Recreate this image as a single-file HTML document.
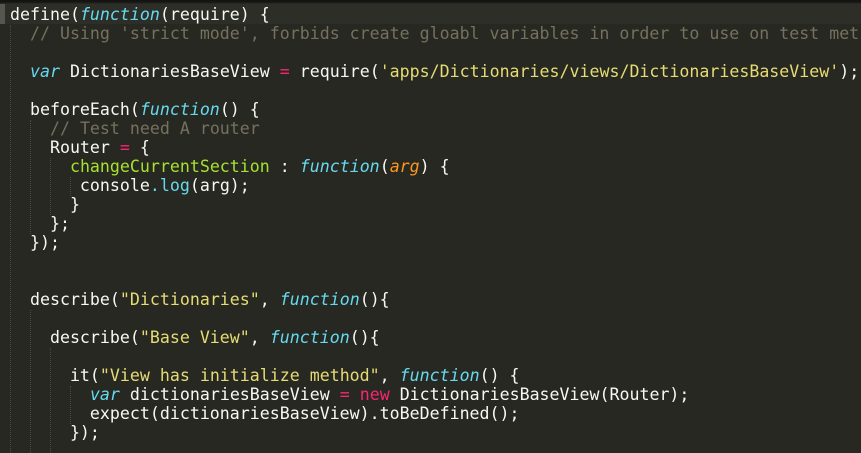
<!DOCTYPE html>
<html><head><meta charset="utf-8"><style>
html,body{margin:0;padding:0;background:#272822;width:861px;height:453px;overflow:hidden}
#top{position:absolute;left:0;top:0;width:861px;height:3px;background:linear-gradient(#111,#1c1d19)}
#cur{position:absolute;left:0;top:4px;width:5px;height:20px;background:#555650}
#hl{position:absolute;left:5px;top:4px;width:856px;height:20px;background:#2d2e28}
pre{position:absolute;left:10px;top:5px;margin:0;font-family:"DejaVu Sans Mono","Liberation Mono",monospace;font-size:16.6px;line-height:19px;color:#f8f8f2;white-space:pre}
.k{color:#66d9ef;font-style:italic}.s{color:#e6db74}.c{color:#75715e}.o{color:#f92672}.g{color:#a6e22e}.a{color:#fd971f;font-style:italic}.f{color:#66d9ef}
.gd{position:absolute;width:0;border-left:1px dotted #4a4b44}
</style></head><body>
<div id="top"></div><div id="hl"></div><div id="cur"></div>
<div class="gd" style="left:10px;top:25px;height:428px"></div>
<div class="gd" style="left:30px;top:120px;height:114px"></div>
<div class="gd" style="left:50px;top:158px;height:57px"></div>
<div class="gd" style="left:70px;top:177px;height:19px"></div>
<div class="gd" style="left:30px;top:310px;height:143px"></div>
<div class="gd" style="left:50px;top:348px;height:105px"></div>
<div class="gd" style="left:70px;top:386px;height:38px"></div>
<pre>define(<span class="k">function</span>(require) {
  <span class="c">// Using 'strict mode', forbids create gloabl variables in order to use on test met</span>

  <span class="k">var</span> DictionariesBaseView <span class="o">=</span> require(<span class="s">'apps/Dictionaries/views/DictionariesBaseView'</span>);

  beforeEach(<span class="k">function</span>() {
    <span class="c">// Test need A router</span>
    Router <span class="o">=</span> {
      <span class="g">changeCurrentSection</span> : <span class="k">function</span>(<span class="a">arg</span>) {
       console<span class="f">.log</span>(arg);
      }
    };
  });


  describe(<span class="s">"Dictionaries"</span>, <span class="k">function</span>(){

    describe(<span class="s">"Base View"</span>, <span class="k">function</span>(){

      it(<span class="s">"View has initialize method"</span>, <span class="k">function</span>() {
        <span class="k">var</span> dictionariesBaseView <span class="o">=</span> <span class="o">new</span> DictionariesBaseView(Router);
        expect(dictionariesBaseView).toBeDefined();
      });
</pre>
</body></html>
